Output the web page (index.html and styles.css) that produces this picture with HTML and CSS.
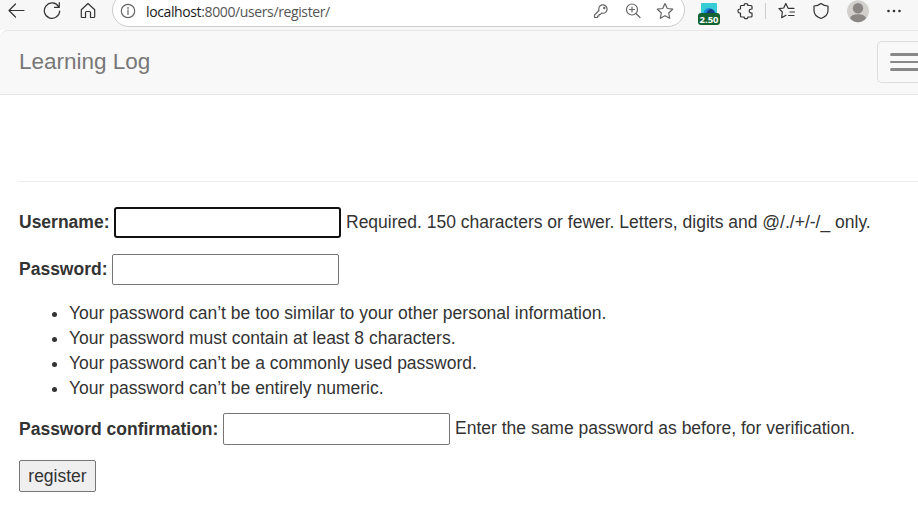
FILE: index.html
```
<!DOCTYPE html>
<html lang="en">
<head>
<meta charset="utf-8">
<title>Learning Log</title>
<link rel="stylesheet" href="styles.css">
</head>
<body>
<header class="toolbar">
  <div class="nav-icons">
    <svg width="18" height="22" viewBox="0 0 18 22"><path d="M17 10.500H2M8.500 4L2 10.500L8.500 17"/></svg>
    <svg width="18" height="22" viewBox="0 0 18 22"><path d="M15.500 6.500A7.700 7.700 0 1 0 16.700 11M16.300 2.500V7.300H11.500"/></svg>
    <svg width="18" height="22" viewBox="0 0 18 22"><path d="M2.300 9.700L9 3.500L15.700 9.700V16.500Q15.700 17.500 14.700 17.500H11.500V12.500Q11.500 11.500 10.500 11.500H7.500Q6.500 11.500 6.500 12.500V17.500H3.300Q2.300 17.500 2.300 16.500Z"/></svg>
  </div>
  <div class="address">
    <svg class="soft info" width="16" height="22" viewBox="0 0 16 22"><circle cx="8" cy="11" r="6.700"/><path d="M8 10V14.500M8 7.300V8.700"/></svg>
    <span class="url">localhost<span class="path">:8000/users/register/</span></span>
    <svg class="soft key" width="18" height="22" viewBox="0 0 18 22"><path d="M7 10.500A4.200 4.200 0 1 1 10.500 13.200L9.500 13L8.500 14.500H7V16H5.500V17.500H2.500V15Z"/><circle cx="12.300" cy="8" r=".6"/></svg>
    <svg class="soft lens" width="18" height="22" viewBox="0 0 18 22"><circle cx="8" cy="9.500" r="5.500"/><path d="M12 13.500L16 17.500M5.500 9.500H10.500M8 7V12"/></svg>
    <svg class="soft star" width="18" height="22" viewBox="0 0 18 22"><path d="M9 3.500L11.300 8.500L16.700 9.200L12.700 13L13.700 18.300L9 15.700L4.300 18.300L5.300 13L1.300 9.200L6.700 8.500Z"/></svg>
  </div>
  <div class="extension">
    <svg width="16" height="12" viewBox="0 0 16 12"><rect class="cyan" width="16" height="12" rx="1"/><path class="blue" d="M2 12Q3 5 8 5Q13 5 16 12Z"/><path class="navy" d="M5 12Q6 6 10 6Q14 7 14 12Z"/></svg>
    <span class="badge">2.50</span>
  </div>
  <svg class="puzzle" width="18" height="22" viewBox="0 0 18 22"><path d="M4 5.500H7.200Q7 3.500 9 3.500Q11 3.500 10.800 5.500H14Q15 5.500 15 6.500V9Q12.200 8.800 12.200 11Q12.200 13.200 15 13V16Q15 17 14 17H10.800Q11 18.700 9 18.700Q7 18.700 7.200 17H4.500Q3.500 17 3.500 16V13Q1 13.200 1 11Q1 8.800 3.500 9V6.500Q3.500 5.500 4 5.500Z"/></svg>
  <i class="separator"></i>
  <svg class="favorites" width="18" height="22" viewBox="0 0 18 22"><path d="M10.500 8.300H16M12 12H16.500M10.500 15.500H16M10 8L7.800 3.500L5.700 8L1 8.700L4.300 12L3.700 17.700L8 15.200"/></svg>
  <svg class="shield" width="18" height="22" viewBox="0 0 18 22"><path d="M9 3.500Q12 6 16 6V10.500Q16 16 9 18.500Q2 16 2 10.500V6Q6 6 9 3.500Z"/></svg>
  <svg class="avatar" width="22" height="24" viewBox="0 0 22 24"><circle class="face" cx="11" cy="11.200" r="11"/><circle class="person" cx="11" cy="8.200" r="5.200"/><path class="person" d="M3 18.500Q4 14.300 11 14.300Q18 14.300 19 18.500Q15.500 22.200 11 22.200Q6.500 22.200 3 18.500Z"/></svg>
  <svg class="more" width="16" height="22" viewBox="0 0 16 22"><circle cx="2.500" cy="11" r="1.300"/><circle cx="8" cy="11" r="1.300"/><circle cx="13.500" cy="11" r="1.300"/></svg>
</header>
<nav class="navbar">
  <a class="brand">Learning Log</a>
  <div class="toggle"><i></i><i></i><i></i></div>
</nav>
<main class="page">
  <div class="page-header"></div>
  <form>
    <div class="field username"><label for="u">Username:</label><input id="u" class="focused" type="text"><span class="help">Required. 150 characters or fewer. Letters, digits and @/./+/-/_ only.</span></div>
    <div class="field password"><label for="p">Password:</label><input id="p" type="password"></div>
    <ul>
      <li>Your password can’t be too similar to your other personal information.</li>
      <li>Your password must contain at least 8 characters.</li>
      <li>Your password can’t be a commonly used password.</li>
      <li>Your password can’t be entirely numeric.</li>
    </ul>
    <div class="field confirm"><label for="c">Password confirmation:</label><input id="c" type="password"><span class="help">Enter the same password as before, for verification.</span></div>
    <button type="button">register</button>
  </form>
</main>
</body>
</html>
```
FILE: styles.css
```
* { box-sizing: border-box; }
body {
  margin: 0;
  width: 918px;
  height: 524px;
  overflow: hidden;
  background: #fff;
  color: #333;
  font: 17.5px/25px "Liberation Sans", Arial, sans-serif;
}
.toolbar {
  display: flex;
  height: 30px;
  background: #f7f7f7;
}
svg {
  flex: none;
  fill: none;
  stroke: #333;
  stroke-width: 1.2;
  stroke-linejoin: round;
  stroke-linecap: round;
}
.nav-icons {
  display: flex;
  gap: 18px;
  width: 112px;
  padding-left: 7px;
}
.address {
  display: flex;
  width: 573px;
  height: 34px;
  margin-top: -7px;
  padding: 7px 0 0 7px;
  border: 1px solid #ccc;
  border-radius: 17px;
  background: #fff;
}
.address svg { margin-top: -1px; }
.soft { stroke: #666; }
.url {
  width: 446px;
  margin-left: 10px;
  color: #1a1a1a;
  font: 14px/22px "Open Sans", sans-serif;
  letter-spacing: -0.38px;
}
.path { color: #555; }
.lens { margin-left: 14px; }
.star { margin-left: 14px; }
.extension {
  position: relative;
  width: 22px;
  height: 25px;
  margin-left: 13px;
  padding: 3px 0 0 3px;
}
.extension svg { display: block; stroke: none; }
.cyan { fill: #38cdd5; }
.navy { fill: #123f83; }
.blue { fill: #1688da; }
.badge {
  position: absolute;
  left: 0;
  top: 13px;
  width: 22px;
  height: 12px;
  border-radius: 3px;
  background: #146332;
  color: #fff;
  text-align: center;
  font: bold 9.5px/13px "Open Sans", sans-serif;
}
.puzzle { margin-left: 17px; }
.separator {
  width: 1px;
  height: 16px;
  margin: 3px 0 0 10px;
  background: #ccc;
}
.favorites { margin-left: 12px; }
.shield { margin-left: 16px; }
.avatar { margin-left: 17px; stroke: none; }
.face { fill: #d1d0cd; }
.person { fill: #8b8784; }
.more { margin-left: 17px; fill: #333; stroke: none; }
.navbar {
  display: flex;
  justify-content: space-between;
  height: 65px;
  border: 1px solid #e7e7e7;
  border-width: 1px 0;
  border-top-left-radius: 8px;
  background: #f8f8f8;
}
.brand {
  margin: 18px 0 0 19px;
  color: #777;
  font-size: 22.5px;
  line-height: 26px;
}
.toggle {
  display: flex;
  flex-direction: column;
  gap: 5px;
  width: 41px;
  height: 42px;
  margin-top: 10px;
  padding: 11px 0 0 12px;
  border: 1px solid #ddd;
  border-right: 0;
  border-radius: 5px 0 0 5px;
}
.toggle i {
  height: 2.500px;
  border-radius: 2px 0 0 2px;
  background: #888;
}
.page { padding: 0 0 0 19px; }
.page-header {
  height: 87px;
  margin-bottom: 25px;
  border-bottom: 1px solid #eee;
}
.field { display: flex; align-items: center; }
label { font-weight: bold; white-space: nowrap; }
input {
  width: 227px;
  height: 31px;
  padding: 0;
  border: 1px solid #767676;
  border-radius: 2px;
  background: #fff;
  outline: 0;
}
.focused { border: 2px solid #101010; border-radius: 3px; }
.help { margin-left: 5px; white-space: nowrap; }
.username { height: 31px; margin-bottom: 16px; }
.username label { width: 95px; }
.password { height: 31px; }
.password label { width: 93px; }
ul { margin: 16px 0 12px; padding-left: 50px; }
.confirm { height: 32px; margin-bottom: 15px; }
.confirm label { width: 204px; }
.confirm input { height: 32px; }
.confirm .help { position: relative; top: -1px; }
button {
  display: block;
  width: 77px;
  height: 32px;
  padding: 0;
  border: 1px solid #767676;
  border-radius: 2px;
  background: #efefef;
  color: #333;
  font: 17.5px/25px "Liberation Sans", Arial, sans-serif;
}
```
